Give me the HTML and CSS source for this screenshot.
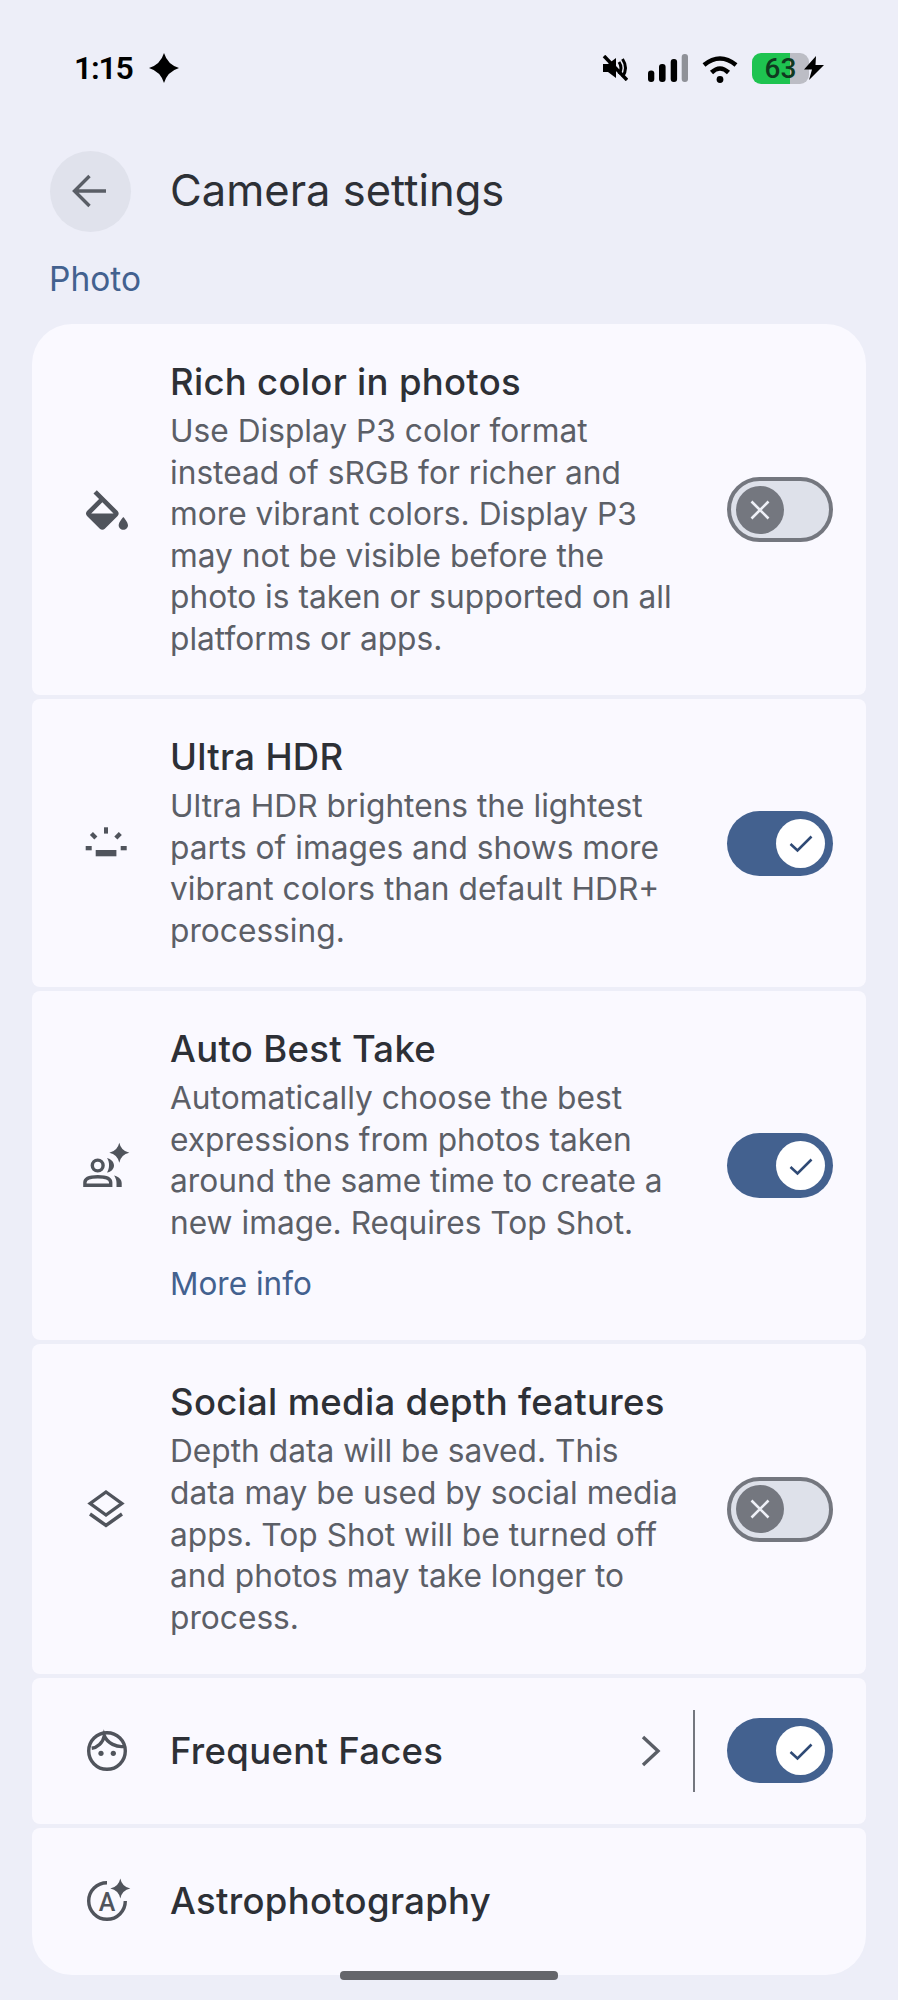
FILE: index.html
```html
<!DOCTYPE html>
<html lang="en">
<head>
    <meta charset="UTF-8">
    <meta name="viewport" content="width=device-width, initial-scale=1.0">
    <title>Camera settings</title>
    <link rel="stylesheet" href="styles.css">
</head>
<body>
    <div class="status-bar">
        <div class="status-left">
            <span class="time">1:15</span>
            <svg class="spark" width="30" height="30" viewBox="0 0 30 30"><path d="M15 0Q18.500 11.500 30 15Q18.500 18.500 15 30Q11.500 18.500 0 15Q11.500 11.500 15 0Z"/></svg>
        </div>
        <div class="status-right">
            <svg class="mute" width="26" height="26" viewBox="0 0 26 26">
                <path d="M1 9h5l8-6v20l-8-6H1z"/>
                <path d="M17 7q4 6 0 12M20.5 4q6 9 0 18" class="mute-arc"/>
                <path d="M2 1l23 24" class="mute-slash"/>
            </svg>
            <svg class="signal" width="40" height="28" viewBox="0 0 40 28">
                <rect x="0" y="16.5" width="6.3" height="11.5" rx="3"/>
                <rect x="11" y="10" width="6.6" height="18" rx="3"/>
                <rect x="22.7" y="5" width="6.4" height="23" rx="3"/>
                <rect class="bar-off" x="33.7" y="0" width="6.3" height="28" rx="3"/>
            </svg>
            <svg class="wifi" width="36" height="29" viewBox="0 0 36 29">
                <path d="M2 11Q18 -2 34 11M9.5 18.5Q18 10.5 26.5 18.5"/>
                <circle cx="18" cy="25.5" r="3.4"/>
            </svg>
            <div class="battery">63</div>
            <svg class="bolt" width="20" height="24" viewBox="0 0 20 24"><path d="M12 0L0 13.5h8L5 24l15-15h-8.500z"/></svg>
        </div>
    </div>

    <div class="header">
        <div class="back">
            <svg width="81" height="81" viewBox="0 0 81 81"><path d="M56 40H25M39.500 25L24.500 40l15 15"/></svg>
        </div>
        <h1>Camera settings</h1>
    </div>

    <div class="section-label">Photo</div>

    <div class="list">
        <div class="card">
            <svg class="icon" viewBox="0 -3.500 24 24"><path d="M16.560 8.940L7.620 0 6.210 1.410l2.380 2.380-5.150 5.150c-.59.59-.59 1.540 0 2.120l5.500 5.500c.29.29.68.44 1.060.44s.77-.15 1.060-.44l5.500-5.500c.59-.58.59-1.530 0-2.120zM5.210 10L10 5.210 14.790 10H5.210zM19 11.500s-2 2.170-2 3.500c0 1.100.9 2 2 2s2-.9 2-2c0-1.330-2-3.500-2-3.500z"/></svg>
            <div class="text">
                <h2>Rich color in photos</h2>
                <p>Use Display P3 color format instead of sRGB for richer and more vibrant colors. Display P3 may not be visible before the photo is taken or supported on all platforms or apps.</p>
            </div>
            <div class="toggle off"><span class="knob"><svg width="24" height="24" viewBox="-12 -12 24 24"><path d="M-8.500-8.500L8.500 8.500M8.500-8.500L-8.500 8.500"/></svg></span></div>
        </div>

        <div class="card">
            <svg class="icon" viewBox="0 0 56 56">
                <rect x="25" y="12.300" width="4" height="6.300"/>
                <rect x="16.700" y="35" width="20.700" height="6.300"/>
                <rect x="6.700" y="31" width="6" height="4.300"/>
                <rect x="41.700" y="31" width="6" height="4.300"/>
                <rect x="12.500" y="17.500" width="4.300" height="6.300" transform="rotate(-45 14.700 20.700)"/>
                <rect x="36.900" y="17.500" width="4.300" height="6.300" transform="rotate(45 39 20.700)"/>
            </svg>
            <div class="text">
                <h2>Ultra HDR</h2>
                <p>Ultra HDR brightens the lightest parts of images and shows more vibrant colors than default HDR+ processing.</p>
            </div>
            <div class="toggle on"><span class="knob"><svg width="24" height="24" viewBox="-12 -12 24 24"><path d="M-10.500 1L-3.500 7.500L10.500-6.500"/></svg></span></div>
        </div>

        <div class="card">
            <svg class="icon" viewBox="0 0 56 56">
                <path d="M40.300 4.800Q42 13 50.300 14.800Q42 16.500 40.300 24.800Q38.500 16.500 30.300 14.800Q38.500 13 40.300 4.800Z"/>
                <circle class="line" cx="18.700" cy="27.500" r="5.400"/>
                <path d="M28 20C32 21 35 24 35 27.500C35 31 32 34 28 34.500C30.500 31 31 24 28 20Z"/>
                <path class="line" d="M5.900 47.200H31.700V44.500C31.700 40.500 26 38.800 18.800 38.800C11.600 38.800 5.900 40.500 5.900 44.500Z"/>
                <path d="M35 37.500C40 39 42.700 41.500 42.700 45V49H37.500V45C37.500 42 36.500 39.500 35 37.500Z"/>
            </svg>
            <div class="text">
                <h2>Auto Best Take</h2>
                <p>Automatically choose the best expressions from photos taken around the same time to create a new image. Requires Top Shot.</p>
                <a class="more">More info</a>
            </div>
            <div class="toggle on"><span class="knob"><svg width="24" height="24" viewBox="-12 -12 24 24"><path d="M-10.500 1L-3.500 7.500L10.500-6.500"/></svg></span></div>
        </div>

        <div class="card">
            <svg class="icon" viewBox="0 0 56 56">
                <path class="line" d="M27 11L42.800 22.500L27 34L11.200 22.500Z"/>
                <path class="line" d="M11 33L27 44.500L43 33"/>
            </svg>
            <div class="text">
                <h2>Social media depth features</h2>
                <p>Depth data will be saved. This data may be used by social media apps. Top Shot will be turned off and photos may take longer to process.</p>
            </div>
            <div class="toggle off"><span class="knob"><svg width="24" height="24" viewBox="-12 -12 24 24"><path d="M-8.500-8.500L8.500 8.500M8.500-8.500L-8.500 8.500"/></svg></span></div>
        </div>

        <div class="card row">
            <svg class="icon" viewBox="0 0 56 56">
                <circle class="line" cx="28" cy="28" r="18.300"/>
                <path class="line" d="M12.700 25.300C18 24.500 24 20 25.300 12.700C28 20 38 25 46 23.300"/>
                <circle cx="22" cy="30.300" r="2.600"/>
                <circle cx="34.300" cy="30.300" r="2.600"/>
            </svg>
            <div class="text"><h2>Frequent Faces</h2></div>
            <svg class="chevron" width="22" height="34" viewBox="0 0 22 34"><path d="M3 3L18 17L3 31"/></svg>
            <div class="divider"></div>
            <div class="toggle on"><span class="knob"><svg width="24" height="24" viewBox="-12 -12 24 24"><path d="M-10.500 1L-3.500 7.500L10.500-6.500"/></svg></span></div>
        </div>

        <div class="card row last">
            <svg class="icon" viewBox="0 0 56 56">
                <path class="line" d="M28 9.700A18.300 18.300 0 1 0 46.300 28"/>
                <path d="M41.300 5.500Q43 13.800 51.300 15.500Q43 17.200 41.300 25.500Q39.600 17.200 31.300 15.500Q39.600 13.800 41.300 5.500Z"/>
                <text x="28" y="38" text-anchor="middle" class="icon-letter">A</text>
            </svg>
            <div class="text"><h2>Astrophotography</h2></div>
        </div>
    </div>

    <div class="home-bar"></div>
</body>
</html>
```

FILE: styles.css
```css
body {
    margin: 0;
    height: 2000px;
    overflow: hidden;
    position: relative;
    background-color: #edeef8;
    font-family: Inter, Roboto, sans-serif;
    color: #2d3036;
}

/* status bar */
.status-bar {
    display: flex;
    justify-content: space-between;
    align-items: center;
    height: 40px;
    padding: 48px 74px 0 74px;
}

.status-left, .status-right {
    display: flex;
    align-items: center;
}

.time {
    font-family: Roboto, sans-serif;
    font-size: 32px;
    font-weight: 600;
    letter-spacing: -1.300px;
    color: #000;
}

.spark {
    margin-left: 17px;
}

.status-right {
    gap: 14px;
}

.mute {
    margin-right: 6px;
}

.mute-arc {
    fill: none;
    stroke: #000;
    stroke-width: 3;
}

.mute-slash {
    fill: none;
    stroke: #000;
    stroke-width: 3.500;
}

.bar-off {
    fill: #8f9198;
}

.wifi path {
    fill: none;
    stroke: #000;
    stroke-width: 4.500;
}

.battery {
    width: 57px;
    height: 31px;
    line-height: 31px;
    border-radius: 9px;
    text-align: center;
    font-family: Roboto, sans-serif;
    font-size: 28px;
    font-weight: 500;
    color: #10391f;
    background: linear-gradient(to right, #1ec350 66%, #bcbdc5 66%);
}

.bolt {
    margin-left: -19px;
}

/* header */
.header {
    display: flex;
    align-items: center;
    gap: 39px;
    margin-top: 63px;
    padding-left: 50px;
}

.back {
    width: 81px;
    height: 81px;
    border-radius: 50%;
    background-color: #e0e2ec;
}

.back svg {
    fill: none;
    stroke: #5a5e66;
    stroke-width: 3.400;
}

h1 {
    margin: 0 0 3px;
    font-size: 43.500px;
    font-weight: 400;
    color: #2d3036;
}

.section-label {
    margin-top: 27px;
    padding-left: 49px;
    font-size: 33.500px;
    line-height: 40px;
    color: #43618f;
}

/* cards */
.list {
    display: flex;
    flex-direction: column;
    gap: 4px;
    margin: 25px 32px 0;
}

.card {
    display: flex;
    align-items: center;
    padding: 0 33px 0 47px;
    border-radius: 8px;
    background-color: #faf9ff;
}

.card:first-child {
    border-radius: 40px 40px 8px 8px;
}

.card.row {
    height: 146px;
}

.card.last {
    height: 147px;
    border-radius: 8px 8px 40px 40px;
}

.icon {
    flex: none;
    width: 56px;
    height: 56px;
    margin-right: 35px;
    fill: #50545c;
}

.icon .line {
    fill: none;
    stroke: #50545c;
    stroke-width: 3.400;
}

.icon-letter {
    font-family: Roboto, sans-serif;
    font-size: 25px;
    font-weight: 500;
    fill: #50545c;
}

.text {
    flex: 1;
    padding: 34px 40px 35.500px 0;
}

.row .text {
    padding: 0;
}

h2 {
    margin: 0;
    font-size: 36.500px;
    line-height: 48px;
    font-weight: 500;
    letter-spacing: 0.300px;
    color: #2d3036;
}

.text p {
    margin: 4px 0 0;
    font-size: 31.700px;
    line-height: 41.600px;
    color: #5c5f67;
}

.more {
    display: block;
    margin-top: 20px;
    font-size: 31.500px;
    line-height: 41.600px;
    color: #43618f;
}

/* toggles */
.toggle {
    flex: none;
    display: flex;
    align-items: center;
    box-sizing: border-box;
    width: 106px;
    height: 65px;
    border-radius: 33px;
}

.toggle.off {
    padding-left: 5px;
    border: 4px solid #74777f;
    background-color: #dee1ea;
}

.toggle.on {
    justify-content: flex-end;
    padding-right: 8px;
    background-color: #43618f;
}

.knob {
    display: flex;
    align-items: center;
    justify-content: center;
    width: 49px;
    height: 49px;
    border-radius: 50%;
}

.off .knob {
    width: 48px;
    height: 48px;
    background-color: #74777f;
}

.on .knob {
    background-color: #fff;
}

.knob svg {
    fill: none;
    stroke-width: 2.600;
}

.off .knob svg {
    stroke: #eef0f7;
}

.on .knob svg {
    stroke: #2f4a75;
}

.chevron {
    fill: none;
    stroke: #5a5e66;
    stroke-width: 3.400;
    margin-right: 31px;
}

.divider {
    width: 2px;
    height: 82px;
    margin-right: 32px;
    background-color: #74777f;
}

/* gesture bar lies over the last card */
.home-bar {
    position: absolute;
    left: 340px;
    top: 1971px;
    width: 218px;
    height: 9px;
    border-radius: 4px;
    background-color: #65666b;
}
```
